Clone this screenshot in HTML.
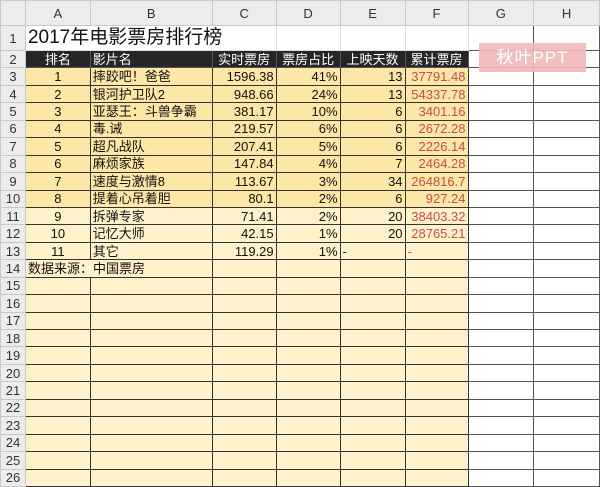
<!DOCTYPE html>
<html><head><meta charset="utf-8"><style>
body{margin:0;width:600px;height:487px;overflow:hidden;background:#fff;font-family:"Liberation Sans","Noto Sans CJK SC",sans-serif;}
table{border-collapse:collapse;table-layout:fixed;position:absolute;left:0;top:0;}
td{padding:0 2px;height:16.45px;font-size:13px;color:#111;border:1px solid #333;white-space:nowrap;overflow:hidden;line-height:15px}
td.rh{background:#ececec;color:#333;border:1px solid #c8c8c8;text-align:center;padding:0;font-size:13px}
tr.ch td{background:#ececec;color:#333;border:1px solid #c8c8c8;text-align:center;height:24px;font-size:13px}
.y{background:#fde7a6}.l{background:#fff1c9}
.c{text-align:center}.r{text-align:right}
.red{color:#c0504d}
tr.h td.d{background:#262626;color:#fff;text-align:center;border-color:#555}
td.w{border:1px solid #555;background:#fff}
.wm{position:absolute;left:479px;top:43px;width:107px;height:29px;background:#f0b9b9;opacity:.9;color:#fff;font-size:17px;text-align:center;line-height:29px;letter-spacing:1px}
</style></head><body>
<table>
<colgroup><col style="width:25px"><col style="width:65px"><col style="width:122px"><col style="width:64px"><col style="width:64px"><col style="width:65px"><col style="width:63px"><col style="width:66px"><col style="width:66px"></colgroup>
<tr class="ch"><td></td><td>A</td><td>B</td><td>C</td><td>D</td><td>E</td><td>F</td><td>G</td><td>H</td></tr>
<tr style="height:24px"><td class="rh">1</td><td colspan="3" style="font-size:19px;border-color:#ddd;height:23px;line-height:24px">2017年电影票房排行榜</td><td style="border-color:#ddd"></td><td style="border-color:#ddd"></td><td style="border-color:#ddd"></td><td class="w"></td><td class="w"></td></tr>
<tr class="h"><td class="rh">2</td><td class="d">排名</td><td class="d" style="text-align:left">影片名</td><td class="d">实时票房</td><td class="d">票房占比</td><td class="d">上映天数</td><td class="d">累计票房</td><td class="w"></td><td class="w"></td></tr>
<tr><td class="rh">3</td><td class="y c">1</td><td class="y">摔跤吧！爸爸</td><td class="y r">1596.38</td><td class="y r">41%</td><td class="y r">13</td><td class="y r red">37791.48</td><td class="w"></td><td class="w"></td></tr>
<tr><td class="rh">4</td><td class="y c">2</td><td class="y">银河护卫队2</td><td class="y r">948.66</td><td class="y r">24%</td><td class="y r">13</td><td class="y r red">54337.78</td><td class="w"></td><td class="w"></td></tr>
<tr><td class="rh">5</td><td class="y c">3</td><td class="y">亚瑟王：斗兽争霸</td><td class="y r">381.17</td><td class="y r">10%</td><td class="y r">6</td><td class="y r red">3401.16</td><td class="w"></td><td class="w"></td></tr>
<tr><td class="rh">6</td><td class="y c">4</td><td class="y">毒.诫</td><td class="y r">219.57</td><td class="y r">6%</td><td class="y r">6</td><td class="y r red">2672.28</td><td class="w"></td><td class="w"></td></tr>
<tr><td class="rh">7</td><td class="y c">5</td><td class="y">超凡战队</td><td class="y r">207.41</td><td class="y r">5%</td><td class="y r">6</td><td class="y r red">2226.14</td><td class="w"></td><td class="w"></td></tr>
<tr><td class="rh">8</td><td class="y c">6</td><td class="y">麻烦家族</td><td class="y r">147.84</td><td class="y r">4%</td><td class="y r">7</td><td class="y r red">2464.28</td><td class="w"></td><td class="w"></td></tr>
<tr><td class="rh">9</td><td class="y c">7</td><td class="y">速度与激情8</td><td class="y r">113.67</td><td class="y r">3%</td><td class="y r">34</td><td class="y r red">264816.7</td><td class="w"></td><td class="w"></td></tr>
<tr><td class="rh">10</td><td class="y c">8</td><td class="y">提着心吊着胆</td><td class="y r">80.1</td><td class="y r">2%</td><td class="y r">6</td><td class="y r red">927.24</td><td class="w"></td><td class="w"></td></tr>
<tr><td class="rh">11</td><td class="l c">9</td><td class="l">拆弹专家</td><td class="l r">71.41</td><td class="l r">2%</td><td class="l r">20</td><td class="l r red">38403.32</td><td class="w"></td><td class="w"></td></tr>
<tr><td class="rh">12</td><td class="l c">10</td><td class="l">记忆大师</td><td class="l r">42.15</td><td class="l r">1%</td><td class="l r">20</td><td class="l r red">28765.21</td><td class="w"></td><td class="w"></td></tr>
<tr><td class="rh">13</td><td class="l c">11</td><td class="l">其它</td><td class="l r">119.29</td><td class="l r">1%</td><td class="l">-</td><td class="l red">-</td><td class="w"></td><td class="w"></td></tr>
<tr><td class="rh">14</td><td class="l" colspan="2" style="border-right-color:#333">数据来源：中国票房</td><td class="l"></td><td class="l"></td><td class="l"></td><td class="l"></td><td class="w"></td><td class="w"></td></tr>
<tr><td class="rh">15</td><td class="l"></td><td class="l"></td><td class="l"></td><td class="l"></td><td class="l"></td><td class="l"></td><td class="w"></td><td class="w"></td></tr>
<tr><td class="rh">16</td><td class="l"></td><td class="l"></td><td class="l"></td><td class="l"></td><td class="l"></td><td class="l"></td><td class="w"></td><td class="w"></td></tr>
<tr><td class="rh">17</td><td class="l"></td><td class="l"></td><td class="l"></td><td class="l"></td><td class="l"></td><td class="l"></td><td class="w"></td><td class="w"></td></tr>
<tr><td class="rh">18</td><td class="l"></td><td class="l"></td><td class="l"></td><td class="l"></td><td class="l"></td><td class="l"></td><td class="w"></td><td class="w"></td></tr>
<tr><td class="rh">19</td><td class="l"></td><td class="l"></td><td class="l"></td><td class="l"></td><td class="l"></td><td class="l"></td><td class="w"></td><td class="w"></td></tr>
<tr><td class="rh">20</td><td class="l"></td><td class="l"></td><td class="l"></td><td class="l"></td><td class="l"></td><td class="l"></td><td class="w"></td><td class="w"></td></tr>
<tr><td class="rh">21</td><td class="l"></td><td class="l"></td><td class="l"></td><td class="l"></td><td class="l"></td><td class="l"></td><td class="w"></td><td class="w"></td></tr>
<tr><td class="rh">22</td><td class="l"></td><td class="l"></td><td class="l"></td><td class="l"></td><td class="l"></td><td class="l"></td><td class="w"></td><td class="w"></td></tr>
<tr><td class="rh">23</td><td class="l"></td><td class="l"></td><td class="l"></td><td class="l"></td><td class="l"></td><td class="l"></td><td class="w"></td><td class="w"></td></tr>
<tr><td class="rh">24</td><td class="l"></td><td class="l"></td><td class="l"></td><td class="l"></td><td class="l"></td><td class="l"></td><td class="w"></td><td class="w"></td></tr>
<tr><td class="rh">25</td><td class="l"></td><td class="l"></td><td class="l"></td><td class="l"></td><td class="l"></td><td class="l"></td><td class="w"></td><td class="w"></td></tr>
<tr><td class="rh">26</td><td class="l"></td><td class="l"></td><td class="l"></td><td class="l"></td><td class="l"></td><td class="l"></td><td class="w"></td><td class="w"></td></tr>
</table>
<div class="wm">秋叶PPT</div>
</body></html>
